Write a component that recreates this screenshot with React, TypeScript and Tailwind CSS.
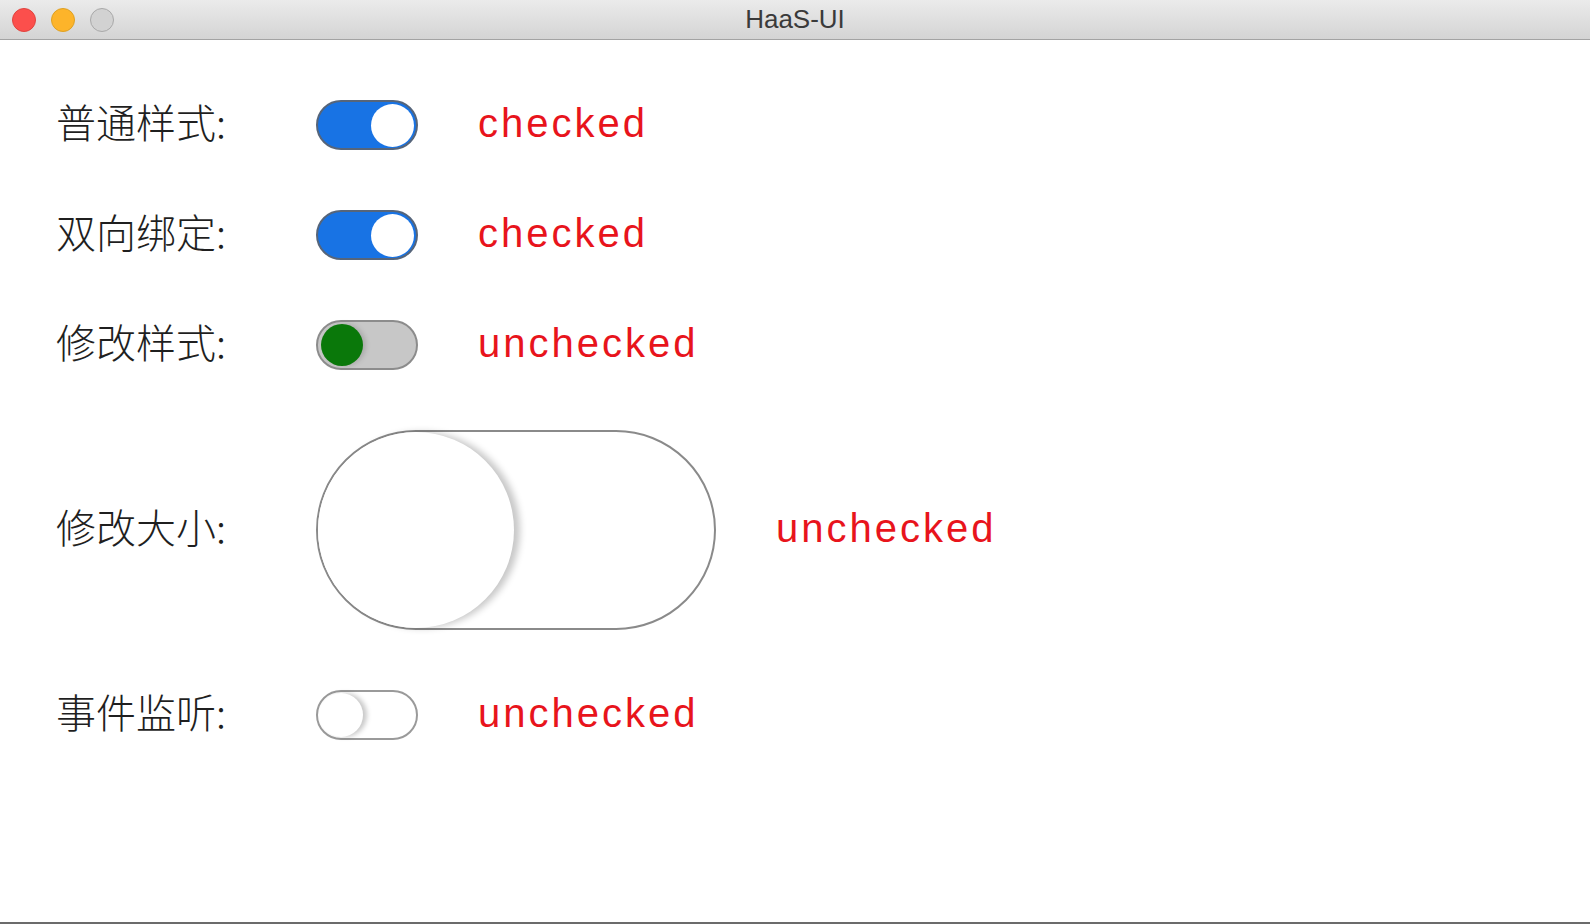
import { useState } from 'react';

const labelFont = { fontFamily: '"Noto Sans CJK SC", "Noto Sans", sans-serif' };
const textFont = { fontFamily: '"Liberation Sans", Arial, sans-serif' };

function Row({ label, children, status }: { label: string; children: React.ReactNode; status: string }) {
    return (
        <div className="flex items-center">
            <div className="w-[260px] shrink-0 pb-[8px] text-[40px] font-light leading-none text-[#1f1f1f]" style={labelFont}>
                {label}
            </div>
            {children}
            <div className="ml-[60px] pb-[4px] text-[40px] leading-none tracking-[3px] text-[#e8141c]" style={textFont}>
                {status}
            </div>
        </div>
    );
}

export default function App() {
    const [basic, setBasic] = useState(true);
    const [bound, setBound] = useState(true);
    const [styled, setStyled] = useState(false);
    const [big, setBig] = useState(false);
    const [listen, setListen] = useState(false);

    return (
        <div className="h-[924px] w-full flex flex-col bg-white border-b-2 border-[#6b6b6b] overflow-hidden">
            {/* title bar */}
            <div className="relative h-[40px] shrink-0 flex items-center bg-gradient-to-b from-[#ebebeb] to-[#d4d4d4] border-b border-[#a3a3a3]">
                <div className="flex items-center gap-[15px] pl-[12px]">
                    <span className="w-[24px] h-[24px] rounded-full bg-[#fc4f4c] border border-[#e0443e]" />
                    <span className="w-[24px] h-[24px] rounded-full bg-[#fdb42a] border border-[#dea123]" />
                    <span className="w-[24px] h-[24px] rounded-full bg-[#d2d2d2] border border-[#a9a9a9]" />
                </div>
                <div className="absolute inset-0 flex items-center justify-center text-[26px] text-[#3a3a3a] pointer-events-none" style={textFont}>
                    HaaS-UI
                </div>
            </div>

            {/* switch rows */}
            <div className="flex flex-col gap-[60px] pt-[60px] pl-[56px]">
                <Row label="普通样式:" status={basic ? 'checked' : 'unchecked'}>
                    <button
                        onClick={() => setBasic(!basic)}
                        className={`w-[102px] h-[50px] shrink-0 rounded-full border-2 flex items-center px-[2px] ${basic ? 'bg-[#1873e4] border-[#56657a] justify-end' : 'bg-white border-[#9a9a9a] justify-start'}`}
                    >
                        <span className="w-[43px] h-[43px] rounded-full bg-white" />
                    </button>
                </Row>

                <Row label="双向绑定:" status={bound ? 'checked' : 'unchecked'}>
                    <button
                        onClick={() => setBound(!bound)}
                        className={`w-[102px] h-[50px] shrink-0 rounded-full border-2 flex items-center px-[2px] ${bound ? 'bg-[#1873e4] border-[#56657a] justify-end' : 'bg-white border-[#9a9a9a] justify-start'}`}
                    >
                        <span className="w-[43px] h-[43px] rounded-full bg-white" />
                    </button>
                </Row>

                <Row label="修改样式:" status={styled ? 'checked' : 'unchecked'}>
                    <button
                        onClick={() => setStyled(!styled)}
                        className={`w-[102px] h-[50px] shrink-0 rounded-full border-2 border-[#8c8c8c] bg-[#c7c7c7] flex items-center px-[3px] ${styled ? 'justify-end' : 'justify-start'}`}
                    >
                        <span className="w-[42px] h-[42px] rounded-full bg-[#0a780a] shadow-[3px_0_5px_rgba(0,0,0,0.15)]" />
                    </button>
                </Row>

                <Row label="修改大小:" status={big ? 'checked' : 'unchecked'}>
                    <button
                        onClick={() => setBig(!big)}
                        className={`w-[400px] h-[200px] shrink-0 rounded-full border-2 border-[#8a8a8a] bg-white flex items-center ${big ? 'justify-end' : 'justify-start'}`}
                    >
                        <span className="w-[196px] h-[196px] rounded-full bg-white shadow-[6px_0_7px_rgba(0,0,0,0.22)]" />
                    </button>
                </Row>

                <Row label="事件监听:" status={listen ? 'checked' : 'unchecked'}>
                    <button
                        onClick={() => setListen(!listen)}
                        className={`w-[102px] h-[50px] shrink-0 rounded-full border-2 border-[#9a9a9a] bg-white flex items-center px-[1px] ${listen ? 'justify-end' : 'justify-start'}`}
                    >
                        <span className="w-[44px] h-[44px] rounded-full bg-white shadow-[4px_0_5px_rgba(0,0,0,0.22)]" />
                    </button>
                </Row>
            </div>
        </div>
    );
}
